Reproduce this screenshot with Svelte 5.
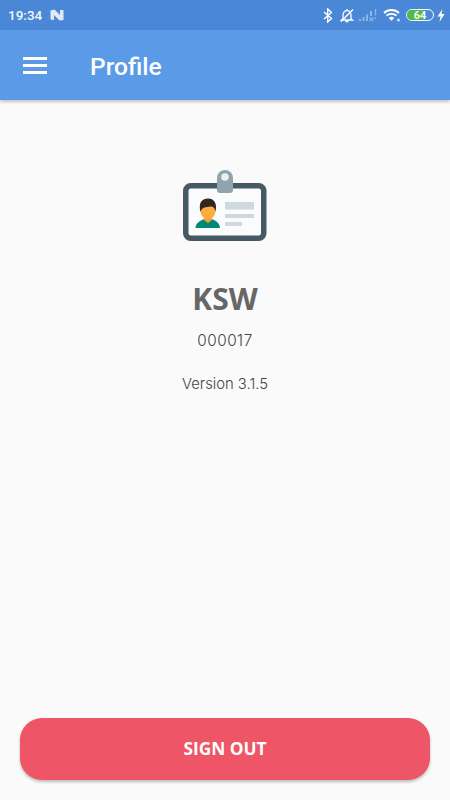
<script>
  const title = 'Profile';
</script>

<div class="page">
  <div class="status">
    <span class="time">19:34</span>
    <svg class="n" width="14" height="12" viewBox="0 0 14 12"><path d="M0.500 1.500 L4.500 0.500 L10 6 V1 L13.500 1 V11 L9.500 11.500 L4 6 V11 L0.500 10.500Z" fill="#dfe9f8"/></svg>
    <span class="spacer"></span>
    <svg class="bt" width="10" height="15" viewBox="0 0 10 15"><path d="M1 4 L8.500 10.500 L4.700 14 V1 L8.500 4.500 L1 11" fill="none" stroke="#fff" stroke-width="1.400"/></svg>
    <svg class="bell" width="14" height="15" viewBox="0 0 14 15"><path d="M3 11 V7 C3 4.500 4.800 2.600 7 2.600 C9.200 2.600 11 4.500 11 7 V11 L12.500 12 H1.500 Z M5.500 13.500 H8.500 M7 1 V2.500" fill="none" stroke="#fff" stroke-width="1.300"/><path d="M1 13.500 L13 1.500" stroke="#fff" stroke-width="1.500"/></svg>
    <svg class="sig" width="18" height="14" viewBox="0 0 18 14"><path d="M0 11h2v2H0zM3.500 9h2v4h-2zM7 6.500h2V13H7z" fill="#8fb4e6"/><path d="M11 3h2v5h-2z" fill="#8fb4e6"/><path d="M10.500 9.500 L14.500 13 M14.500 9.500 L10.500 13 M16.500 1v6.500 M16.500 9v2" stroke="#8fb4e6" stroke-width="1.300" fill="none"/></svg>
    <svg class="wifi" width="18" height="14" viewBox="0 0 18 14"><path d="M1 5 C5 1 12 1 16 5 M3.500 7.700 C6 5.300 11 5.300 13.500 7.700" fill="none" stroke="#fff" stroke-width="1.800"/><path d="M5.800 10 C7.500 8.300 9.500 8.300 11.200 10 L8.500 12.800Z" fill="#fff"/><circle cx="15.500" cy="12" r="1.500" fill="#cfe0f6"/></svg>
    <div class="batt"><span class="fill"></span><span class="num">64</span></div>
    <svg class="bolt" width="8" height="13" viewBox="0 0 8 13"><path d="M5.500 0 L0.500 7.500 H3.500 L2.500 13 L7.500 5 H4.500 Z" fill="#fff"/></svg>
  </div>

  <header class="bar">
    <div class="burger"><i></i><i></i><i></i></div>
    <h1>{title}</h1>
  </header>

  <main>
    <svg class="badge" width="86" height="74" viewBox="0 0 86 74">
      <rect x="3.750" y="17.750" width="78" height="52.500" rx="5" fill="#fafbfc" stroke="#455a64" stroke-width="5.500"/>
      <path d="M35 10 a8 8 0 0 1 16 0 V22 a3 3 0 0 1 -3 3 H38 a3 3 0 0 1 -3 -3Z" fill="#90a4ae"/>
      <circle cx="43" cy="9" r="3.800" fill="#eceff1"/>
      <path d="M13.500 60 C14 54.500 18 53 22 51 H30 C34 53 37.500 54.500 38 60 Z" fill="#00897b"/>
      <path d="M22 47 H30 V52 L26 55 L22 52Z" fill="#f59e28"/>
      <ellipse cx="26" cy="43" rx="7.500" ry="8.500" fill="#fbae3c"/>
      <path d="M18.500 44 C16 34 20.500 30.500 26 30.500 C32 30.500 35.500 35 33.500 44 C33 40 31.500 38.500 28.500 38.500 C24.500 39.500 20 38.500 18.500 44Z" fill="#33261f"/>
      <rect x="43" y="34" width="29" height="7.500" fill="#cfd8dc"/>
      <rect x="43" y="46" width="29" height="4" fill="#cfd8dc"/>
      <rect x="43" y="54" width="17" height="4" fill="#cfd8dc"/>
    </svg>
    <div class="name">KSW</div>
    <div class="code">000017</div>
    <div class="version">Version 3.1.5</div>
  </main>

  <footer>
    <button>SIGN OUT</button>
  </footer>
</div>

<style>
  :global(body) { margin: 0; background: #fafafa; }
  .page { width: 450px; height: 800px; display: flex; flex-direction: column; background: #fafafa; overflow: hidden; }
  .status { height: 30px; box-sizing: border-box; flex: none; background: #4a88d7; display: flex; align-items: center; padding: 0 5px 0 8px; color: #f2f6fc; font-family: Roboto, sans-serif; }
  .time { font-size: 13.500px; font-weight: 500; }
  .n { margin-left: 8px; }
  .spacer { flex: 1; }
  .bell { margin-left: 7px; }
  .sig { margin-left: 5px; }
  .wifi { margin-left: 6px; }
  .batt { position: relative; box-sizing: border-box; width: 28px; height: 12px; border: 1px solid #fff; border-radius: 6px; margin-left: 5px; overflow: hidden; display: flex; align-items: center; justify-content: center; }
  .fill { position: absolute; left: 0; top: 0; bottom: 0; width: 64%; background: #52b848; }
  .num { position: relative; font-size: 11px; font-weight: 700; color: #f4fbf2; line-height: 1; }
  .bolt { margin-left: 3px; }
  .bar { height: 70px; flex: none; box-sizing: border-box; background: #5b9ae6; box-shadow: 0 2px 3px rgba(0,0,0,.22); display: flex; align-items: center; padding-left: 23px; position: relative; }
  .burger { width: 24px; display: flex; flex-direction: column; gap: 4px; margin-right: 43px; }
  .burger i { display: block; height: 3px; background: #fff; }
  h1 { margin: 2px 0 0; color: #fff; font: 500 24.500px Roboto, sans-serif; }
  main { flex: 1; display: flex; flex-direction: column; align-items: center; padding-top: 68px; }
  .badge { display: block; }
  .name { margin-top: 36px; font: 700 30px "Open Sans", sans-serif; color: #666; line-height: 42px; }
  .code { margin-top: 11px; font: 300 15.300px Inter, sans-serif; letter-spacing: .5px; color: #444; line-height: 20px; }
  .version { margin-top: 23px; font: 300 14.800px Inter, sans-serif; color: #444; line-height: 20px; }
  footer { flex: none; padding: 0 20px 20px; }
  button { display: block; width: 100%; height: 62.500px; border: 0; border-radius: 22px; background: #ee5566; color: #fff; font: 700 17.300px "Open Sans", sans-serif; box-shadow: 0 2px 3px rgba(0,0,0,.25); }
</style>
